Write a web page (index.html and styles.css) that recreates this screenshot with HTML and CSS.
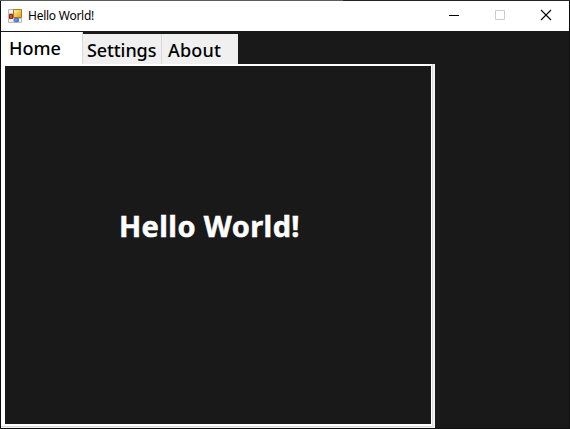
FILE: index.html
```html
<!DOCTYPE html>
<html lang="en">
<head>
<meta charset="utf-8">
<title>Hello World!</title>
<link rel="stylesheet" href="styles.css">
</head>
<body>
<div class="window">
  <header class="titlebar">
    <svg class="app-icon" width="14" height="14" viewBox="0 0 14 14">
      <defs>
        <linearGradient id="gold" x2="1" y2="1"><stop stop-color="#fff3a0"/><stop offset="1" stop-color="#dfa010"/></linearGradient>
        <linearGradient id="blue" x2="1" y2="1"><stop stop-color="#85b6f7"/><stop offset="1" stop-color="#326bd0"/></linearGradient>
      </defs>
      <path d="M.5 .5h13v13H.5z" fill="#f2f2f2" stroke="#b8b8b8"/>
      <path d="M5.500 0v14M0 4.500h5M0 9.500h14" stroke="#c3c3c3"/>
      <path d="M5.500 .5h8v8h-8z" fill="url(#gold)" stroke="#a87c25"/>
      <path d="M1.500 5.500h3v4h-3z" fill="#d95343" stroke="#a01e18"/>
      <path d="M6.500 9.500h4v3h-4z" fill="url(#blue)" stroke="#4278d0"/>
    </svg>
    <span class="caption">Hello World!</span>
    <div class="controls">
      <svg class="control" width="46" height="30" viewBox="0 0 46 30"><path d="M18 14.500h10" stroke="#000"/></svg>
      <svg class="control" width="46" height="30" viewBox="0 0 46 30"><path d="M18.500 9.500h9v9h-9z" fill="none" stroke="#ccc"/></svg>
      <svg class="control" width="46" height="30" viewBox="0 0 46 30"><path d="M18 9l10 10M28 9L18 19" stroke="#000" stroke-width="1.1"/></svg>
    </div>
  </header>
  <main class="client">
    <nav class="tabs">
      <div class="tab home"><span>Home</span></div>
      <div class="tab settings"><span>Settings</span></div>
      <div class="tab about"><span>About</span></div>
    </nav>
    <section class="frame">
      <div class="page"><h1>Hello World!</h1></div>
    </section>
  </main>
</div>
</body>
</html>
```
FILE: styles.css
```css
* { box-sizing: border-box; }
body {
  margin: 0;
  overflow: hidden;
  background: #191919;
  font-family: "Noto Sans", sans-serif;
}
.window {
  width: 570px;
  height: 429px;
  padding: 1px;
  background: linear-gradient(90deg, #5c5a5d 343px, #242224 343px) top / 100% 1px no-repeat #0f0e10;
}
.titlebar {
  display: flex;
  align-items: center;
  height: 30px;
  padding-left: 7px;
  background: #fff;
}
.caption {
  margin-left: 6px;
  font: 12px/16px "Noto Sans", sans-serif;
  letter-spacing: -0.25px;
  color: #000;
}
.controls { display: flex; margin-left: auto; }
.client {
  display: flex;
  flex-direction: column;
  height: 397px;
  padding-top: 1px;
  background: #191919;
}
.tabs { display: flex; align-items: flex-end; height: 32px; }
.tab {
  height: 30px;
  border-right: 1px solid #d9d9d9;
  background: #f0f0f0;
  color: #000;
  font: 500 18px/32px "Noto Sans", sans-serif;
  white-space: nowrap;
}
.home { width: 82px; height: 32px; padding-left: 8px; background: #fff; line-height: 33px; }
.settings { width: 79px; padding-left: 4px; letter-spacing: -0.1px; }
.about { width: 76px; padding-left: 6px; border-right: 0; letter-spacing: 0.2px; }
.frame {
  width: 434px;
  height: 364px;
  padding: 2px 4px 4px;
  background: #fff;
  box-shadow: inset -2px -1px #f0f0f0, inset -3px -2px #dcdcdc;
}
.page {
  height: 358px;
  padding: 140px 0 0 113px;
  background: #191919;
}
h1 {
  margin: 0;
  color: #fff;
  font: 700 29px/40px "Noto Sans", sans-serif;
  letter-spacing: 0.4px;
  -webkit-text-stroke: 0.5px #fff;
  padding-left: 1px;
  white-space: nowrap;
}
```
